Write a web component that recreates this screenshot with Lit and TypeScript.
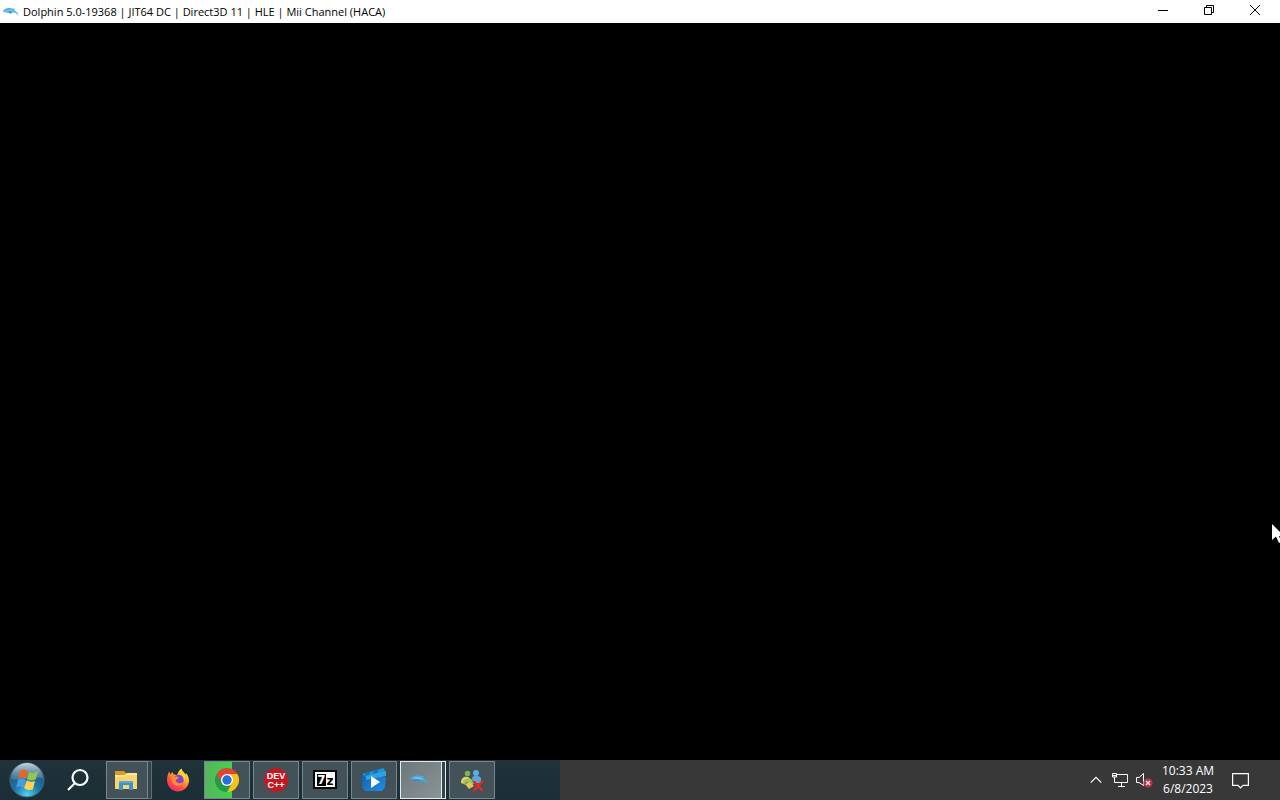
import { LitElement, html, svg, css } from "lit";
import { customElement, property } from "lit/decorators.js";

const dolphin = svg`
  <path d="M1 8.500C3 4.500 8 2.500 13 4L18 4.500L17 6.500C20 8 22.500 10 23.500 15C21.500 11.500 19 9.500 15 9.500L11 12L11.500 9C8 8 5 8.500 1 8.500Z" fill="#45a9e2"/>
  <path d="M3 7.500C7 5 13 4.500 18 8.500C13 6.800 8 6.800 3 7.500Z" fill="#8accec"/>
  <path d="M2 9C7 8 12 8.500 14 9L11 11L10 10Z" fill="#2b8fd0"/>`;

const icons = {
  explorer: svg`<svg viewBox="0 0 24 24" width="24" height="24">
    <path d="M1 3h9l2 2v4H1z" fill="#e09a20"/>
    <path d="M1 7h10l2-2h10v16H1z" fill="#f9d570"/>
    <path d="M1 7h10l2-2h10v2H12l-2 2H1z" fill="#ffe69b"/>
    <path d="M5 13h14v9h-4v-5H9v5H5z" fill="#3f91cb"/>
    <path d="M5 13h14v2H5z" fill="#5aa6d6"/></svg>`,
  firefox: svg`<svg viewBox="0 0 24 24" width="24" height="24">
    <defs><linearGradient id="ff" x1=".85" y1="0" x2=".2" y2="1"><stop offset="0" stop-color="#fff34a"/><stop offset=".35" stop-color="#ffb52b"/><stop offset=".65" stop-color="#ff563c"/><stop offset="1" stop-color="#ee217e"/></linearGradient></defs>
    <path d="M1 12C1 8.500 2 6 3 3.500L4.500 6.500L6 4L8 6.500L11 7C12 5 13 2 15.500 0.500C16 3 18 4 19.500 6.500L20 5C22.500 8 23.500 11 22.800 14.500C21.500 20 17.500 23.500 12 23.500C6 23.500 1 18.500 1 12Z" fill="url(#ff)"/>
    <circle cx="12.500" cy="12" r="5.200" fill="#8144cc"/>
    <path d="M5 9L11 8.500L13 10L9.500 12C10 15 14 16.500 17 14C16 18 11 19 8 16.500C6 15 5 12 5 9Z" fill="#ff8a34"/>
    <path d="M14 3C14 6 19 8 18 14C20 11 19 6 14 3Z" fill="#ffdc3d"/></svg>`,
  chrome: svg`<svg viewBox="0 0 24 24" width="24" height="24">
    <path d="M12 12L12 6H22.400A12 12 0 0 1 12 24L17 15Z" fill="#fbc116"/>
    <path d="M12 12L7 15L1.600 6A12 12 0 0 0 12 24L17 15Z" fill="#25984a"/>
    <path d="M12 6H22.400A12 12 0 0 0 1.600 6L7 15Z" fill="#e24335"/>
    <circle cx="12" cy="12" r="6" fill="#fff"/><circle cx="12" cy="12" r="4.700" fill="#276fdc"/></svg>`,
  dev: svg`<svg viewBox="0 0 24 24" width="24" height="24"><circle cx="12" cy="12" r="12" fill="#c8161f"/>
    <g fill="#fff" font-family="Liberation Sans, sans-serif" font-weight="700" font-size="9" text-anchor="middle"><text x="12" y="11">DEV</text><text x="12" y="20">C++</text></g></svg>`,
  zip: svg`<svg viewBox="0 0 24 20" width="24" height="20"><path d="M0 0h24v19H0z" fill="#080808"/><path d="M2 2h20v15H2z" fill="#fff"/><path d="M4 4h9v12H4z" fill="#000"/>
    <g font-family="DejaVu Sans, sans-serif" font-weight="700" text-anchor="middle"><text x="8.500" y="14" font-size="12" fill="#fff">7</text><text x="17" y="15" font-size="12">z</text></g></svg>`,
  movies: svg`<svg viewBox="0 0 26 26" width="26" height="26">
    <defs><linearGradient id="mv" x2="1" y2="1"><stop stop-color="#125faa"/><stop offset="1" stop-color="#238fe5"/></linearGradient></defs>
    <path d="M1 7L23 1L24 5L3 11Z" fill="#1598dc"/><path d="M5 6L9 5L8 8L4 9ZM13 4L17 3L16 6L12 7Z" fill="#176db8"/>
    <path d="M1 7L5 10H25L24 20L21 24H4L1 20Z" fill="url(#mv)"/><path d="M5 9L25 4V9L5 13Z" fill="#2ea3e0"/>
    <path d="M10 9V21L19 15Z" fill="#fff"/></svg>`,
  dolphin: svg`<svg viewBox="0 0 24 18" width="20" height="18">${dolphin}</svg>`,
  people: svg`<svg viewBox="0 0 24 24" width="24" height="24">
    <circle cx="7.500" cy="5.500" r="2.700" fill="#7cb850"/><circle cx="16" cy="5" r="3" fill="#5aafe5"/>
    <path d="M12 10C13 7 19 7 21 10L21 15L13 15Z" fill="#5ba5dd"/>
    <path d="M1 15C1 9 5 8 8 9L12 12L11 16L6 12L4 16Z" fill="#e8d15f"/>
    <path d="M3 13C6 9 12 10 14 15L11 19L7 14L4 17Z" fill="#9cc55b"/><path d="M5 16L10 14L14 18L9 21Z" fill="#e2c45c"/>
    <path d="M12 13L15 13L18 16L21 13H24L20 18L24 23H21L18 20L15 23H12L16 18Z" fill="#e02a26"/></svg>`,
};

@customElement("task-item")
class TaskItem extends LitElement {
  @property() icon: keyof typeof icons = "explorer";
  @property() label = "";
  @property() look = "";

  static styles = css`
    :host { display: block; flex: none; width: 46px; }
    .item { display: flex; width: 100%; height: 100%; box-sizing: border-box; padding: 0; margin: 0; background: none; border: 0; }
    .face { display: flex; flex: 1; align-items: center; justify-content: center; border: 1px solid #78878b; background: #435158; }
    .plain .face { border-color: transparent; background: none; }
    .progress .face { background: linear-gradient(90deg, #58b45e 0, #3fd44c 27px, #435158 27px); }
    .edge { width: 3px; border: solid #5f6f74; border-width: 1px 1px 1px 0; background: #34444b; }
    .stack .face { padding-right: 2px; }
    .active .face { padding-right: 4px; border-color: #e6ebed; background: linear-gradient(135deg, #6c787c, #8b9496); }
    .active .edge { border-color: #e6ebed; background: #35454d; }
    svg { display: block; }
  `;

  render() {
    const stacked = this.look === "stack" || this.look === "active";
    return html`<button class="item ${this.look}" aria-label=${this.label}>
      <span class="face">${icons[this.icon]}</span>
      ${stacked ? html`<span class="edge"></span>` : ""}
    </button>`;
  }
}

@customElement("app-root")
class AppRoot extends LitElement {
  static styles = css`
    :host { display: flex; flex-direction: column; height: 100vh; overflow: hidden; position: relative; background: #000; font: 12px/18px "Open Sans", "Noto Sans", sans-serif; }
    button { display: flex; align-items: center; justify-content: center; padding: 0; margin: 0; border: 0; background: none; color: inherit; font: inherit; }
    svg { display: block; }
    .title { display: flex; flex: none; height: 23px; align-items: center; background: #fff; color: #000; }
    .logo { margin: 0 4px 0 2px; }
    .name { flex: 1; margin: 0; font-size: 11px; font-weight: 400; white-space: nowrap; }
    .controls { display: flex; align-self: flex-start; padding-right: 2px; }
    .control { width: 46px; height: 20px; }
    .screen { flex: 1; min-height: 0; }
    .taskbar { display: flex; flex: none; height: 40px; background: #383838; color: #fff; }
    .apps { display: flex; flex: none; width: 43.75%; box-sizing: border-box; gap: 3px; background: linear-gradient(#20333a, #1b2e35); }
    .apps task-item { height: 38px; margin-top: 1px; }
    .start { width: 54px; }
    .search { width: 46px; padding-right: 4px; }
    .tray { display: flex; margin-left: auto; align-items: center; }
    .chevron { width: 24px; height: 40px; }
    .status { width: 24px; height: 40px; }
    .clock { width: 64px; height: 40px; flex-direction: column; font-size: 12px; white-space: nowrap; }
    .notice { width: 40px; height: 40px; margin-right: 20px; }
    .pointer { position: absolute; right: -4px; top: 524px; }
  `;

  render() {
    return html`
      <header class="title">
        <svg class="logo" viewBox="0 0 24 18" width="17" height="14">${dolphin}</svg>
        <h1 class="name">Dolphin 5.0-19368 | JIT64 DC | Direct3D 11 | HLE | Mii Channel (HACA)</h1>
        <div class="controls">
          <button class="control" aria-label="Minimize"><svg width="10" height="10" stroke="#000"><path d="M0 5.500h10"/></svg></button>
          <button class="control" aria-label="Restore"><svg width="10" height="10" fill="none" stroke="#000"><path d="M.5 2.500h7v7h-7zM2.500 2.500v-2h7v7h-2"/></svg></button>
          <button class="control" aria-label="Close"><svg width="10" height="10" stroke="#000"><path d="M0 0L10 10M10 0L0 10"/></svg></button>
        </div>
      </header>
      <main class="screen"></main>
      <footer class="taskbar">
        <nav class="apps" aria-label="Applications">
          <button class="start" aria-label="Start"><svg width="36" height="36" viewBox="0 0 36 36">
            <defs><radialGradient id="orb" cx=".5" cy=".95" r=".85"><stop offset="0" stop-color="#54d5f4"/><stop offset=".45" stop-color="#1777ad"/><stop offset="1" stop-color="#234f72"/></radialGradient>
            <linearGradient id="gloss" x2="0" y2="1"><stop stop-color="#dceaf0" stop-opacity=".85"/><stop offset="1" stop-color="#b7ccd7" stop-opacity=".15"/></linearGradient></defs>
            <circle cx="18" cy="18" r="17" fill="url(#orb)" stroke="#436779"/>
            <path d="M2 17A16 16 0 0 1 34 17C25 12 12 21 2 17Z" fill="url(#gloss)"/>
            <path d="M11 9C13 7 16 7 19 9L17 17C14 15 11 15 9 17Z" fill="#e86427"/>
            <path d="M20 10C23 12 26 11 29 9L27 17C24 19 21 19 18 17Z" fill="#91c850"/>
            <path d="M9 18C11 16 14 16 17 18L15 26C12 24 9 24 7 26Z" fill="#489ddd"/>
            <path d="M18 18C20 20 23 20 26 19L24 27C21 29 18 28 15 26Z" fill="#ffd34d"/></svg></button>
          <button class="search" aria-label="Search"><svg width="24" height="24" fill="none" stroke="#fff" stroke-width="2.200"><circle cx="14" cy="9.500" r="7.500"/><path d="M9 15L2 22"/></svg></button>
          <task-item icon="explorer" label="File Explorer" look="stack"></task-item>
          <task-item icon="firefox" label="Firefox" look="plain"></task-item>
          <task-item icon="chrome" label="Google Chrome" look="progress"></task-item>
          <task-item icon="dev" label="Dev-C++"></task-item>
          <task-item icon="zip" label="7-Zip"></task-item>
          <task-item icon="movies" label="Movies"></task-item>
          <task-item icon="dolphin" label="Dolphin" look="active"></task-item>
          <task-item icon="people" label="Contacts"></task-item>
        </nav>
        <section class="tray" aria-label="System tray">
          <button class="chevron" aria-label="Show hidden icons"><svg width="12" height="8" fill="none" stroke="#fff" stroke-width="1.200"><path d="M.7 6.700L6 1.300L11.300 6.700"/></svg></button>
          <button class="status" aria-label="Network"><svg width="16" height="16" fill="none" stroke="#fff"><path d="M5 2.500h10.500v8H2.500V5M9.500 10.500v4M6 14.500h7M.5 1.500h4v3.500h-4zM1 3.500h3"/></svg></button>
          <button class="status" aria-label="Volume muted"><svg width="18" height="16" viewBox="0 0 18 16"><path d="M1.500 5.500h2.500L8.500 1.500v12L4 10.500H1.500z" fill="none" stroke="#fff"/><circle cx="13" cy="11" r="4.700" fill="#b92f45"/><path d="M11 9l4 4m0-4l-4 4" stroke="#fff" stroke-width="1.200"/></svg></button>
          <button class="clock"><span>10:33 AM</span><span>6/8/2023</span></button>
          <button class="notice" aria-label="Notifications"><svg width="17" height="17" fill="none" stroke="#fff" stroke-width="1.200"><path d="M.6 1.600h15.800v11.800H11l-2.500 2.600L6 13.400H.6z"/></svg></button>
        </section>
      </footer>
      <svg class="pointer" width="12" height="20"><path d="M0 0V16L4 12.500L7 19L9.500 18L7 12H12Z" fill="#fff"/></svg>`;
  }
}
